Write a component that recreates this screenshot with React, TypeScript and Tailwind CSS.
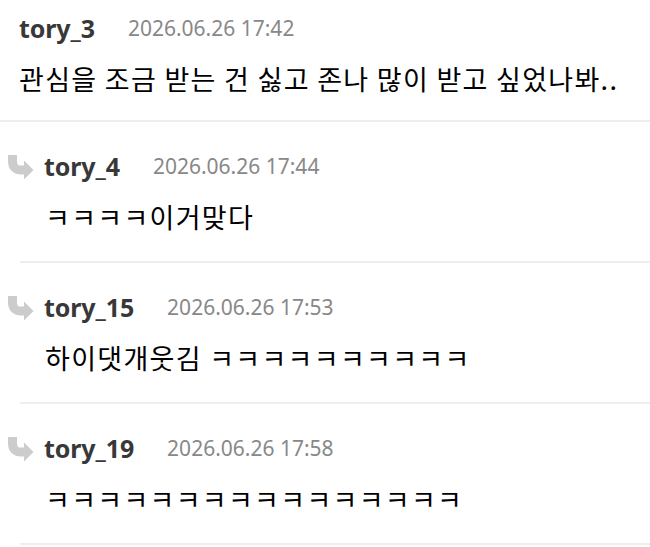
import React from 'react'

type Comment = {
  id: number
  user: string
  date: string
  body: string
  reply?: boolean
}

const comments: Comment[] = [
  { id: 1, user: 'tory_3', date: '2026.06.26 17:42', body: '관심을 조금 받는 건 싫고 존나 많이 받고 싶었나봐..' },
  { id: 2, user: 'tory_4', date: '2026.06.26 17:44', body: 'ㅋㅋㅋㅋ이거맞다', reply: true },
  { id: 3, user: 'tory_15', date: '2026.06.26 17:53', body: '하이댓개웃김 ㅋㅋㅋㅋㅋㅋㅋㅋㅋㅋ', reply: true },
  { id: 4, user: 'tory_19', date: '2026.06.26 17:58', body: 'ㅋㅋㅋㅋㅋㅋㅋㅋㅋㅋㅋㅋㅋㅋㅋㅋ', reply: true },
]

// curved "reply" arrow shown before nested comments
function ReplyIcon() {
  return (
    <svg width="27" height="24" viewBox="0 0 27 24" className="shrink-0">
      <path d="M5.5 0 V6 Q5.5 15 14 15 H18" fill="none" stroke="#cccccc" strokeWidth="9" />
      <path d="M17 5.5 L26.5 15 L17 24.5 Z" fill="#cccccc" />
    </svg>
  )
}

function CommentItem({ c }: { c: Comment }) {
  return (
    <div className={c.reply ? 'pt-[28px] pb-[24px] pl-[7px]' : 'pt-[12px] pb-[21px] pl-[19px]'}>
      <div className="flex items-center h-[34px]">
        {c.reply && (
          <span className="mr-[10px] flex items-center">
            <ReplyIcon />
          </span>
        )}
        <span className="text-[25px] font-bold text-[#383838] tracking-[-0.1px]">{c.user}</span>
        <span className="ml-[33px] text-[21px] text-[#888888]">{c.date}</span>
      </div>
      <p
        className={`mt-[13px] h-[40px] leading-[40px] text-[27px] tracking-[1.3px] text-black whitespace-nowrap ${c.reply ? 'pl-[38px]' : ''}`}
        style={{ fontFamily: '"Noto Sans CJK KR", "Noto Sans", sans-serif' }}
      >
        {c.body}
      </p>
    </div>
  )
}

export default function App() {
  return (
    <div className="w-[650px] min-h-[547px] bg-white overflow-hidden" style={{ fontFamily: '"Noto Sans", "Noto Sans CJK KR", sans-serif' }}>
      {comments.map((c) => (
        <div key={c.id}>
          <CommentItem c={c} />
          <div className={c.reply ? 'ml-5 h-[2px] bg-[#eeeeee]' : 'h-[2px] bg-[#eeeeee]'} />
        </div>
      ))}
    </div>
  )
}
